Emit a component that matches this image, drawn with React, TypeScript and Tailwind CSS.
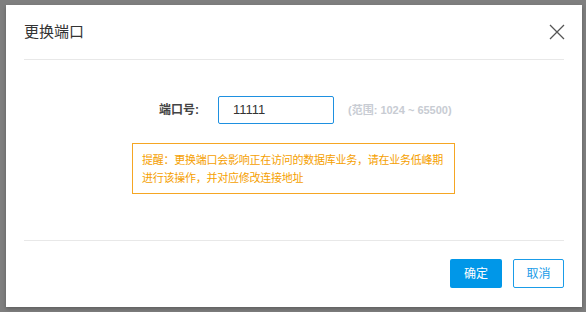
export default function App() {
  return (
    <div
      className="relative h-[312px] w-[586px] overflow-hidden bg-[#7f7f7f]"
      style={{ fontFamily: '"Liberation Sans", "Noto Sans CJK SC", sans-serif' }}
    >
      <div className="ml-[6px] mt-[5px] flex h-[302px] w-[576px] flex-col bg-white px-[18px] shadow-[0_2px_4px_rgba(0,0,0,0.25)]">
        <div className="flex h-[55px] shrink-0 items-center justify-between border-b border-[#e8e8e8]">
          <span className="pt-[1px] text-[15px] text-[#333]">更换端口</span>
          <svg width="16" height="16" viewBox="0 0 16 16" className="mr-[-1px]">
            <path d="M1 1L15 15M15 1L1 15" stroke="#555" strokeWidth="1.3" fill="none" />
          </svg>
        </div>

        <div className="flex h-[181px] shrink-0 flex-col items-start border-b border-[#e8e8e8]">
          <div className="mt-[36px] ml-[135px] flex items-center">
            <span className="w-[59px] text-[12px] font-bold text-[#444]">端口号:</span>
            <div className="flex h-[28px] w-[116px] items-center rounded-[2px] border border-[#1e90e0] px-[14px] text-[13px] text-[#333]">
              11111
            </div>
            <span className="ml-[14px] text-[11px] font-bold text-[#c8ccd3]">(范围: 1024 ~ 65500)</span>
          </div>
          <div className="mt-[19px] ml-[108px] h-[51px] w-[323px] whitespace-nowrap border border-[#f5a623] px-[9px] pt-[7px] text-[11px] leading-[18px] tracking-[-0.25px] text-[#f5a000]">
            提醒：更换端口会影响正在访问的数据库业务，请在业务低峰期
            <br />
            进行该操作，并对应修改连接地址
          </div>
        </div>

        <div className="flex justify-end gap-[11px] pt-[18px]">
          <button className="h-[29px] w-[52px] rounded-[2px] bg-[#0097e8] text-[12px] text-white">确定</button>
          <button className="h-[29px] w-[51px] rounded-[2px] border border-[#1a9ce8] bg-white text-[12px] text-[#1a9ce8]">
            取消
          </button>
        </div>
      </div>
    </div>
  );
}
